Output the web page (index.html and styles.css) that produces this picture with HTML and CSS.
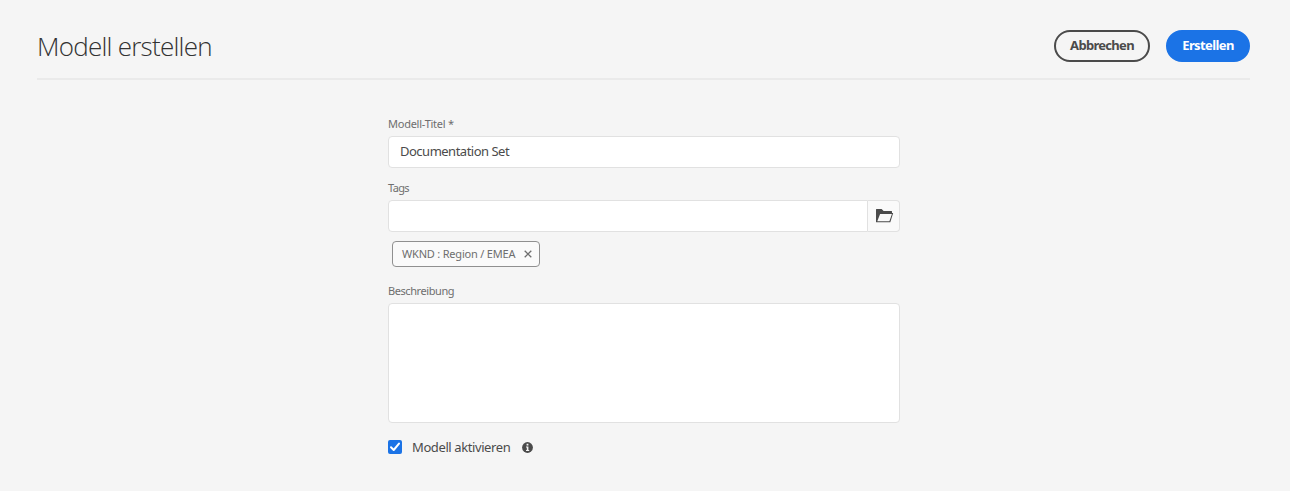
FILE: index.html
```html
<!DOCTYPE html>
<html lang="de">
<head>
<meta charset="utf-8">
<title>Modell erstellen</title>
<link rel="stylesheet" href="styles.css">
</head>
<body>
<header class="header">
  <h1 class="title">Modell erstellen</h1>
  <div class="actions">
    <button class="button" type="button">Abbrechen</button>
    <button class="button primary" type="button">Erstellen</button>
  </div>
</header>
<main class="form">
  <label class="label label-title" for="title">Modell-Titel *</label>
  <input class="input" id="title" value="Documentation Set">
  <label class="label label-tags" for="tags">Tags</label>
  <div class="picker">
    <input class="input picker-input" id="tags">
    <button class="browse" type="button" aria-label="Durchsuchen">
      <svg width="18" height="14" viewBox="0 0 18 14"><path fill="#4b4b4b" fill-rule="evenodd" d="M.5 0H5.600L7.600 2H15.500Q16 2 16 2.500V4H17.200L14.300 13.300H.5Q0 13.300 0 12.800V.5Q0 0 .5 0ZM4.100 5L1.300 12.200H13.400L15.900 5Z"/></svg>
    </button>
  </div>
  <div class="tag"><span class="tag-text">WKND : Region / EMEA</span>
    <svg width="8" height="8" viewBox="0 0 8 8"><path d="M.7.7L7.300 7.300M7.300.7L.7 7.300" stroke="#6e6e6e" stroke-width="1.300"/></svg>
  </div>
  <label class="label label-desc" for="desc">Beschreibung</label>
  <textarea class="input area" id="desc"></textarea>
  <div class="check-row">
    <svg class="check" width="14" height="14" viewBox="0 0 14 14"><rect width="14" height="14" rx="2" fill="#1b73e6"/><path d="M3 7.300L5.700 10L11 3.600" fill="none" stroke="#fff" stroke-width="2" stroke-linecap="round" stroke-linejoin="round"/></svg>
    <span class="check-text">Modell aktivieren</span>
    <svg class="info" width="11" height="11" viewBox="0 0 11 11"><circle cx="5.500" cy="5.500" r="5.400" fill="#4b4b4b"/><path fill="#f5f5f5" d="M4.600 1.700h1.800v1.800H4.600ZM4 4.500h2.400v3.400h.8v1H4v-1h.8V5.500H4Z"/></svg>
  </div>
</main>
</body>
</html>
```
FILE: styles.css
```css
* { box-sizing: border-box; }
body {
  margin: 0;
  height: 491px;
  background: #f5f5f5;
  color: #4b4b4b;
  font-family: "Noto Sans", "Open Sans", sans-serif;
  overflow: hidden;
}
.header {
  display: flex;
  justify-content: space-between;
  margin: 0 40px 0 37px;
  height: 80px;
  padding-top: 30px;
  border-bottom: 2px solid #eaeaea;
}
.title {
  margin: 0;
  font: 300 26px/32px "Open Sans", sans-serif;
  letter-spacing: -0.75px;
  color: #323232;
  white-space: nowrap;
}
.actions { display: flex; gap: 16px; }
.button {
  width: 96px;
  height: 32px;
  padding: 0 0 2px;
  border: 2px solid #4b4b4b;
  border-radius: 16px;
  background: transparent;
  color: #4b4b4b;
  font: 700 13px/18px "Noto Sans", sans-serif;
  letter-spacing: -0.7px;
}
.primary {
  width: 84px;
  border-color: #1b73e6;
  background: #1b73e6;
  color: #fff;
  letter-spacing: -0.6px;
}
.form {
  display: flex;
  flex-direction: column;
  width: 512px;
  margin: 36px 0 0 388px;
}
.label {
  height: 20px;
  font-size: 11px;
  line-height: 16px;
  letter-spacing: -0.6px;
  color: #6e6e6e;
}
.label-title { letter-spacing: -0.25px; }
.label-desc { letter-spacing: -0.42px; }
.input {
  width: 100%;
  height: 32px;
  padding: 0 11px 2px;
  border: 1px solid #e1e1e1;
  border-radius: 4px;
  outline: none;
  background: #fff;
  color: #4b4b4b;
  font: 13px/18px "Noto Sans", sans-serif;
  letter-spacing: -0.5px;
}
.label-tags { margin-top: 12px; }
.picker { display: flex; }
.picker-input { width: 480px; border-radius: 4px 0 0 4px; }
.browse {
  display: flex;
  align-items: center;
  width: 32px;
  height: 32px;
  padding: 0 0 0 8px;
  border: 1px solid #e1e1e1;
  border-left: 0;
  border-radius: 0 4px 4px 0;
  background: #fafafa;
}
.tag {
  display: flex;
  align-items: center;
  justify-content: space-between;
  width: 148px;
  height: 26px;
  margin: 9px 0 0 4px;
  padding: 0 7px 0 9px;
  border: 1px solid #909090;
  border-radius: 4px;
  background: #fafafa;
  color: #6e6e6e;
}
.tag-text { font-size: 11px; line-height: 16px; letter-spacing: -0.2px; white-space: nowrap; }
.label-desc { margin-top: 16px; }
.area { height: 120px; resize: none; }
.check-row { display: flex; align-items: center; height: 20px; margin-top: 14px; }
.check-text { margin: 0 11.500px 0 10px; font-size: 13px; line-height: 18px; letter-spacing: -0.4px; white-space: nowrap; }
```
